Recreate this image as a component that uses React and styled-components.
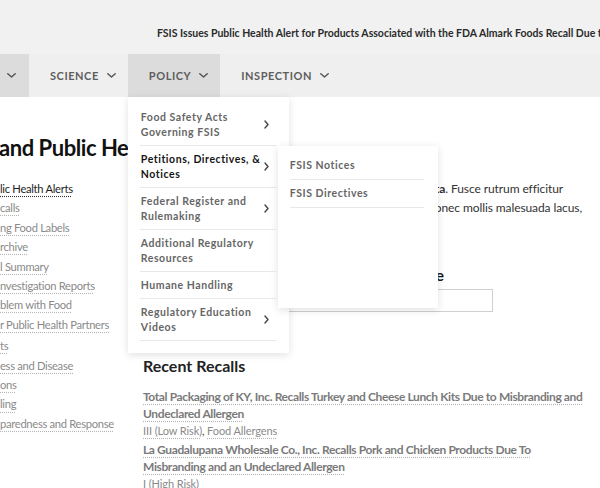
import styled, { createGlobalStyle } from "styled-components";

const GlobalStyle = createGlobalStyle`
  html, body {
    margin: 0;
    padding: 0;
    background: #ffffff;
  }
  body {
    font-family: Lato, "Liberation Sans", sans-serif;
    overflow: hidden;
  }
`;

const sidebarLinks = [
  { label: "lic Health Alerts", active: true },
  { label: "calls" },
  { label: "ng Food Labels" },
  { label: "rchive" },
  { label: "l Summary" },
  { label: "nvestigation Reports" },
  { label: "blem with Food" },
  { label: "r Public Health Partners" },
  { label: "ts", gap: true },
  { label: "ess and Disease" },
  { label: "ons" },
  { label: "ling" },
  { label: "paredness and Response" },
];

const policyMenu = [
  { label: ["Food Safety Acts", "Governing FSIS"], sub: true },
  { label: ["Petitions, Directives, &", "Notices"], sub: true, active: true },
  { label: ["Federal Register and", "Rulemaking"], sub: true },
  { label: ["Additional Regulatory", "Resources"] },
  { label: ["Humane Handling"] },
  { label: ["Regulatory Education", "Videos"], sub: true },
];

const recalls = [
  {
    title:
      "Total Packaging of KY, Inc. Recalls Turkey and Cheese Lunch Kits Due to Misbranding and Undeclared Allergen",
    tags: ["III (Low Risk)", "Food Allergens"],
  },
  {
    title:
      "La Guadalupana Wholesale Co., Inc. Recalls Pork and Chicken Products Due To Misbranding and an Undeclared Allergen",
    tags: ["I (High Risk)"],
  },
];

const Page = styled.div`
  width: 600px;
  height: 488px;
  overflow: hidden;
  position: relative;
`;

const AlertBar = styled.div`
  height: 54px;
  background: #f1f1f1;
  display: flex;
  align-items: flex-end;
  padding: 0 0 14px 157px;
  box-sizing: border-box;
`;

const AlertText = styled.a`
  font-size: 10.5px;
  font-weight: 700;
  color: #2b2b2b;
  white-space: nowrap;
  line-height: 14px;
`;

const NavBar = styled.nav`
  height: 43px;
  background: #efefef;
  display: flex;
  position: relative;
  z-index: 5;
`;

const NavItem = styled.div`
  position: relative;
  display: flex;
  align-items: center;
  gap: 8px;
  padding: ${({ $partial }) => ($partial ? "0 13px 0 7px" : "0 12px 0 21px")};
  background: ${({ $active }) => ($active ? "#dcdcdc" : "transparent")};
  font-size: 11px;
  font-weight: 700;
  letter-spacing: 0.55px;
  color: #5e5e5e;
  text-transform: uppercase;
`;

const DownChevron = () => (
  <svg width="9" height="5" viewBox="0 0 9 5">
    <polyline
      points="0.8,0.8 4.5,4 8.2,0.8"
      fill="none"
      stroke="#555"
      strokeWidth="1.5"
      strokeLinecap="round"
      strokeLinejoin="round"
    />
  </svg>
);

const RightChevron = () => (
  <svg width="5" height="9" viewBox="0 0 5 9">
    <polyline
      points="1,1 4,4.5 1,8"
      fill="none"
      stroke="#444"
      strokeWidth="1.4"
      strokeLinecap="round"
      strokeLinejoin="round"
    />
  </svg>
);

const Dropdown = styled.ul`
  position: absolute;
  top: 100%;
  left: 0;
  width: 161px;
  margin: 0;
  padding: 7px 0 12px;
  list-style: none;
  background: #ffffff;
  box-shadow: 0 2px 8px rgba(0, 0, 0, 0.12);
  text-transform: none;
  letter-spacing: 0.55px;
`;

const MenuItem = styled.li`
  position: relative;
  margin: 0 13px 0 12px;
  padding: 5.5px 7px 5.5px 1px;
  border-bottom: 1px solid #e8e8e8;
  display: flex;
  align-items: center;
  justify-content: space-between;
  font-size: 10.5px;
  line-height: 15px;
  font-weight: 700;
  white-space: nowrap;
  color: ${({ $active }) => ($active ? "#151515" : "#666")};
`;

const SubMenu = styled.ul`
  position: absolute;
  top: 0;
  left: 138px;
  width: 160px;
  height: 162px;
  box-sizing: border-box;
  margin: 0;
  padding: 6px 0 0;
  list-style: none;
  background: #ffffff;
  box-shadow: 0 2px 8px rgba(0, 0, 0, 0.12);
`;

const SubItem = styled.li`
  margin: 0 14px 0 12px;
  padding: 6px 0;
  border-bottom: 1px solid #e8e8e8;
  font-size: 10.5px;
  line-height: 15px;
  font-weight: 700;
  color: #666;
`;

const Content = styled.main`
  padding-top: 37px;
`;

const PageTitle = styled.h1`
  margin: 0 0 17px -1px;
  font-size: 22px;
  letter-spacing: -0.45px;
  line-height: 28px;
  font-weight: 700;
  color: #111;
  white-space: nowrap;
`;

const Columns = styled.div`
  display: grid;
  grid-template-columns: 143px 447px;
`;

const SideList = styled.ul`
  margin: 0;
  padding: 0;
  list-style: none;
`;

const SideItem = styled.li`
  margin-top: ${({ $gap }) => ($gap ? "2px" : "0")};
  font-size: 11.2px;
  letter-spacing: -0.3px;
  line-height: 19.4px;
  white-space: nowrap;
`;

const DottedLink = styled.a`
  color: ${({ $dark }) => ($dark ? "#1d1d1d" : "#8a8a8a")};
  text-decoration: underline dotted;
  text-decoration-color: ${({ $dark }) => ($dark ? "#333" : "#b5b5b5")};
  text-underline-offset: 3px;
`;

const MainCol = styled.div`
  display: flex;
  flex-direction: column;
`;

const Intro = styled.p`
  margin: 0;
  font-size: 12px;
  letter-spacing: -0.09px;
  line-height: 19px;
  color: #333;
  white-space: nowrap;
`;

const SearchLabel = styled.h3`
  margin: 29px 0 4px;
  font-size: 16px;
  line-height: 20px;
  font-weight: 700;
  color: #1a1a1a;
`;

const SearchInput = styled.div`
  width: 350px;
  height: 23px;
  border: 1px solid #cfcfcf;
  box-sizing: border-box;
`;

const RecentTitle = styled.h2`
  margin: 43px 0 11px;
  font-size: 16px;
  line-height: 22px;
  font-weight: 700;
  color: #222;
`;

const RecallList = styled.div`
  display: flex;
  flex-direction: column;
  gap: 1px;
`;

const RecallTitle = styled.a`
  display: block;
  font-size: 12px;
  letter-spacing: -0.38px;
  line-height: 17px;
  font-weight: 700;
  color: #7a7a7a;
  text-decoration: underline dotted;
  text-decoration-color: #b5b5b5;
  text-underline-offset: 3px;
  padding-right: 4px;
`;

const RecallMeta = styled.div`
  font-size: 11px;
  letter-spacing: -0.1px;
  line-height: 18px;
  color: #333;
`;

export default function App() {
  return (
    <Page>
      <GlobalStyle />
      <AlertBar>
        <AlertText>
          FSIS Issues Public Health Alert for Products Associated with the FDA
          Almark Foods Recall Due to Listeria
        </AlertText>
      </AlertBar>

      <NavBar>
        <NavItem $partial $active>
          <DownChevron />
        </NavItem>
        <NavItem>
          Science <DownChevron />
        </NavItem>
        <NavItem $active>
          Policy <DownChevron />
          <Dropdown>
            {policyMenu.map((item) => (
              <MenuItem key={item.label[0]} $active={item.active}>
                <span>
                  {item.label.map((line, i) => (
                    <span key={line}>
                      {i > 0 && <br />}
                      {line}
                    </span>
                  ))}
                </span>
                {item.sub && <RightChevron />}
                {item.active && (
                  <SubMenu>
                    <SubItem>FSIS Notices</SubItem>
                    <SubItem>FSIS Directives</SubItem>
                  </SubMenu>
                )}
              </MenuItem>
            ))}
          </Dropdown>
        </NavItem>
        <NavItem>
          Inspection <DownChevron />
        </NavItem>
      </NavBar>

      <Content>
        <PageTitle>and Public Health Alerts</PageTitle>
        <Columns>
          <SideList>
            {sidebarLinks.map((link) => (
              <SideItem key={link.label} $gap={link.gap}>
                <DottedLink $dark={link.active}>{link.label}</DottedLink>
              </SideItem>
            ))}
          </SideList>

          <MainCol>
            <Intro>
              Lorem ipsum dolor sit amet, sed consectetur elit.{" "}
              <b>Nulla vita</b>. Fusce rutrum efficitur
              <br />
              Aliquam erat volutpat, sed pretium sapien porttitor eu. Donec mollis malesuada lacus,
              <br />
              et dapibus nulla.
            </Intro>
            <SearchLabel>Search for a Recall by Establishment Name</SearchLabel>
            <SearchInput />

            <RecentTitle>Recent Recalls</RecentTitle>
            <RecallList>
              {recalls.map((recall) => (
                <div key={recall.title}>
                  <RecallTitle>{recall.title}</RecallTitle>
                  <RecallMeta>
                    {recall.tags.map((tag, i) => (
                      <span key={tag}>
                        {i > 0 && ", "}
                        <DottedLink>{tag}</DottedLink>
                      </span>
                    ))}
                  </RecallMeta>
                </div>
              ))}
            </RecallList>
          </MainCol>
        </Columns>
      </Content>
    </Page>
  );
}
